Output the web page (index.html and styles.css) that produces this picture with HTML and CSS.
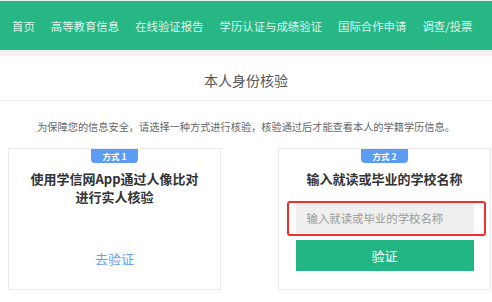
FILE: index.html
```html
<!DOCTYPE html>
<html lang="zh-CN">
<head>
  <meta charset="UTF-8" />
  <title>本人身份核验</title>
  <meta name="viewport" content="width=device-width, initial-scale=1" />
  <link rel="stylesheet" href="styles.css">
</head>
<body>

  <nav class="topnav">
    <a href="#">首页</a>
    <a href="#">高等教育信息</a>
    <a href="#">在线验证报告</a>
    <a href="#">学历认证与成绩验证</a>
    <a href="#">国际合作申请</a>
    <a href="#">调查/投票</a>
  </nav>

  <main class="page">
    <h2 class="page-title">本人身份核验</h2>
    <p class="tip">为保障您的信息安全，请选择一种方式进行核验，核验通过后才能查看本人的学籍学历信息。</p>

    <div class="cards">
      <div class="card">
        <span class="badge">方式 1</span>
        <h3>使用学信网App通过人像比对<br>进行实人核验</h3>
        <a class="link" href="#">去验证</a>
      </div>

      <div class="card">
        <span class="badge">方式 2</span>
        <h3>输入就读或毕业的学校名称</h3>
        <form class="school-form" onsubmit="event.preventDefault();">
          <div class="field">
            <input type="text" placeholder="输入就读或毕业的学校名称">
            <span class="mark"></span>
          </div>
          <button type="submit">验证</button>
        </form>
      </div>
    </div>
  </main>

</body>
</html>
```

FILE: styles.css
```css
body {
  margin: 0;
  font-family: "Noto Sans CJK SC", "Liberation Sans", sans-serif;
  color: #333;
  background: #fff;
  border-top: 1px solid #e6f4ee;
}

.topnav {
  display: flex;
  align-items: center;
  gap: 16px;
  height: 49px;
  padding-left: 12px;
  background: #26b785;
  border-bottom: 6px solid #f1f1f1;
}

.topnav a {
  color: #dff5ec;
  font-size: 11.4px;
  text-decoration: none;
  white-space: nowrap;
}

.page-title {
  margin: 0;
  height: 44px;
  line-height: 48px;
  font-size: 14px;
  font-weight: normal;
  color: #555;
  text-align: center;
  border-bottom: 1px solid #f0f0f0;
}

.tip {
  margin: 0;
  padding-top: 17px;
  line-height: 18px;
  font-size: 10.2px;
  color: #666;
  text-align: center;
}

.cards {
  display: flex;
  gap: 57px;
  padding: 12px 0 0 8px;
}

.card {
  width: 211px;
  height: 140px;
  border: 1px solid #ebebeb;
  display: flex;
  flex-direction: column;
  align-items: center;
}

.badge {
  width: 47px;
  height: 14px;
  line-height: 14px;
  background: #5d9cf5;
  color: #fff;
  font-size: 8.5px;
  font-weight: bold;
  text-align: center;
  border-radius: 0 0 4px 4px;
}

.card h3 {
  margin: 7px 0 0;
  font-size: 13px;
  line-height: 18px;
  color: #333;
  text-align: center;
}

.link {
  margin-top: 43px;
  font-size: 13px;
  color: #6a9ff2;
  text-decoration: none;
}

.school-form {
  margin-top: 15px;
  width: 178px;
}

.field {
  position: relative;
}

.field input {
  display: block;
  width: 100%;
  height: 30px;
  box-sizing: border-box;
  padding: 0 11px;
  border: none;
  background: #efefef;
  font-family: inherit;
  font-size: 11.4px;
  color: #333;
}

.field input::placeholder {
  color: #9a9a9a;
}

.mark {
  position: absolute;
  left: -9px;
  right: -12px;
  top: -2px;
  bottom: -3px;
  border: 2px solid #f0302c;
  border-radius: 3px;
}

.school-form button {
  display: block;
  width: 100%;
  height: 31px;
  margin-top: 7px;
  border: none;
  background: #22b684;
  color: #fff;
  font-family: inherit;
  font-size: 13px;
}
```
